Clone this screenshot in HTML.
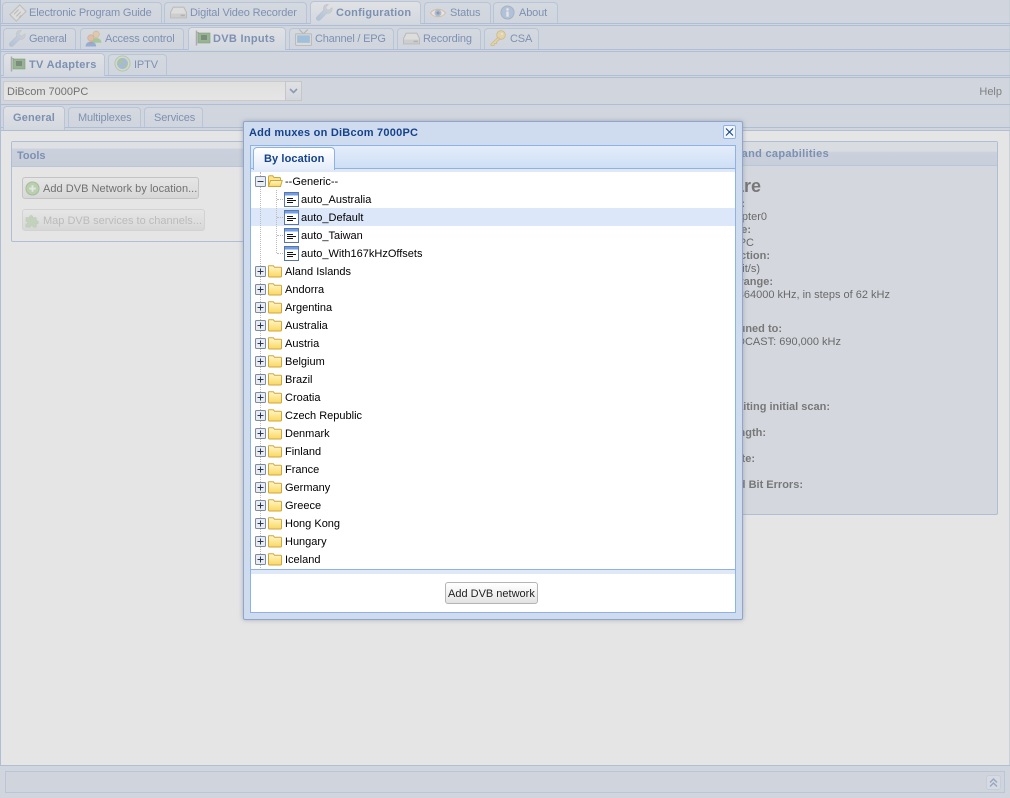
<!DOCTYPE html>
<html><head><meta charset="utf-8"><title>Add muxes</title>
<style>
html,body{margin:0;padding:0;width:1010px;height:798px;overflow:hidden;background:#fff;font:11px "Liberation Sans",Arial,sans-serif;color:#000}
.a{position:absolute}
#app{position:absolute;left:0;top:0;width:1010px;height:798px;overflow:hidden;background:#fff}
.bar{position:absolute;left:0;width:1010px;background:#d6e0f0}
.ln{position:absolute;left:0;width:1010px;height:1px;background:#92b0dc}
.t{position:absolute;box-sizing:border-box;border:1px solid #a4bee4;border-bottom:0;border-radius:4px 4px 0 0;background:linear-gradient(#dde5f3,#d5dff0);color:#2c5598;white-space:nowrap;line-height:19px;height:21px;letter-spacing:-.14px}
.t.on{background:linear-gradient(#f4f7fc,#dae5f5);font-weight:bold;height:22px;letter-spacing:.3px}
.t span{position:absolute;top:1px}
.t svg{position:absolute;top:1px;left:6px}
.r{position:absolute;white-space:nowrap;line-height:13px;color:#000}
.b{font-weight:bold;color:#222}
#mask{position:absolute;left:0;top:0;width:1010px;height:798px;background:#ccc;opacity:.5}
#dlg{position:absolute;left:243px;top:121px;width:500px;height:499px;box-sizing:border-box;border:1px solid #8fa6c8;border-radius:2px;background:#cfdcef;box-shadow:0 0 5px rgba(120,130,150,.55)}
.row{position:absolute;left:250px;width:485px;height:18px;line-height:18px;white-space:nowrap}
.row b{font-weight:normal;position:absolute;top:1px}
.row svg{position:absolute}
.btn{position:absolute;box-sizing:border-box;border:1px solid #bbb;border-radius:3px;background:linear-gradient(#fff,#f0f0f0 60%,#e2e2e2);white-space:nowrap;text-align:left}
</style></head><body>
<svg width="0" height="0" style="position:absolute">
<defs>
<linearGradient id="fo" x1="0" y1="0" x2="0" y2="1"><stop offset="0" stop-color="#fff8cc"/><stop offset="1" stop-color="#fbd760"/></linearGradient>
<linearGradient id="wr" x1="0" y1="1" x2="1" y2="0"><stop offset="0" stop-color="#8fb6ea"/><stop offset=".55" stop-color="#b6cdea"/><stop offset="1" stop-color="#d8d8d8"/></linearGradient>
<symbol id="folder" viewBox="0 0 16 14"><path d="M1.500 3.200V12a1 1 0 0 0 1 1h11a1 1 0 0 0 1-1V4.200a1 1 0 0 0-1-1H7.500L6.300 1.700H2.600a1 1 0 0 0-1.100 1.500z" fill="url(#fo)" stroke="#cfa63e"/></symbol>
<symbol id="ofolder" viewBox="0 0 16 14"><path d="M1.500 3V12.500H13.500V4.500a1 1 0 0 0-1-1H7L5.800 1.800H2.500a1 1 0 0 0-1 1.200z" fill="#fbe58c" stroke="#cfa63e"/><path d="M1.500 12.500L3.500 6.500H15.200L13.500 12.500z" fill="url(#fo)" stroke="#cfa63e"/></symbol>
<symbol id="leaf" viewBox="0 0 15 15"><rect x=".5" y=".5" width="14" height="14" fill="#fff" stroke="#5a76a8"/><rect x="1" y="1" width="13" height="2.500" fill="#6f9de6"/><path d="M3 6.500h6M3 8.500h9M3 10.500h6" stroke="#111" stroke-width="1"/></symbol>
<symbol id="plus" viewBox="0 0 11 11"><rect x=".5" y=".5" width="10" height="10" rx="1" fill="#e9ecf1" stroke="#7d8ba0"/><path d="M2.500 5.500h6M5.500 2.500v6" stroke="#2a3a55"/></symbol>
<symbol id="minus" viewBox="0 0 11 11"><rect x=".5" y=".5" width="10" height="10" rx="1" fill="#e9ecf1" stroke="#7d8ba0"/><path d="M2.500 5.500h6" stroke="#2a3a55"/></symbol>
<symbol id="wrench" viewBox="0 0 16 16"><path d="M15 3.500l-2.800 2.300-2.300-.6-.6-2.300L11.600 .4C9.400-.2 7 1.400 7 4c0 .7.100 1.200.3 1.700L.9 12a2.100 2.100 0 0 0 3 3l6.300-6.400c2.800 1 5.800-1.600 4.800-5.100z" fill="url(#wr)" stroke="#b4b4b4" stroke-width=".5"/></symbol>
<symbol id="hdd" viewBox="0 0 16 16"><path d="M3 3h10l2.500 5v5H.5V8z" fill="#eee" stroke="#aaa"/><path d="M1 9h14v3.500H1z" fill="#cfcfcf"/><rect x="10" y="10" width="4" height="1.500" fill="#999"/></symbol>
<symbol id="tag" viewBox="0 0 16 16"><path d="M.8 9.500L9.500 .8l5.700 5.700L6.500 15.200z" fill="#ececec" stroke="#b0b0b0"/><path d="M4.500 9l4-4M6.500 11l4-4M9 12l2-2" stroke="#aaa"/></symbol>
<symbol id="eye" viewBox="0 0 16 16"><path d="M.5 8C4 3 12 3 15.500 8 12 13 4 13 .5 8z" fill="#fff" stroke="#d8ae7c"/><circle cx="8" cy="8" r="3.500" fill="#8facd4"/><circle cx="8" cy="8" r="1.500" fill="#4a648f"/></symbol>
<symbol id="info" viewBox="0 0 16 16"><circle cx="8" cy="8" r="7" fill="#97b6e4" stroke="#7b98c2"/><rect x="6.700" y="7" width="2.600" height="5.500" fill="#fff"/><circle cx="8" cy="4.700" r="1.400" fill="#fff"/></symbol>
<symbol id="users" viewBox="0 0 16 16"><circle cx="10.500" cy="4" r="3" fill="#f2c48d" stroke="#c99a60" stroke-width=".5"/><path d="M6 12c0-3 2-4.500 4.500-4.500S15.500 9 15.500 12z" fill="#86c06a"/><circle cx="5.500" cy="7.500" r="3" fill="#f0b080" stroke="#c98a50" stroke-width=".5"/><path d="M.5 15.500c0-3 2-4.500 5-4.500s5 1.500 5 4.500z" fill="#5f8fd8"/><path d="M4 11l1.500 2L7 11z" fill="#d9534f"/></symbol>
<symbol id="card" viewBox="0 0 16 16"><rect x="3" y="3" width="12" height="10" fill="#5f9e5a" stroke="#3c6a3a" stroke-width=".6"/><rect x="6" y="5" width="6" height="5" fill="#2d4f2d"/><path d="M1.500 .5v15" stroke="#8a8a8a" stroke-width="1.500"/><path d="M1 2.500h3" stroke="#8a8a8a"/></symbol>
<symbol id="tv" viewBox="0 0 16 16"><path d="M4 .5L8 4.500 12 .5" fill="none" stroke="#999"/><rect x=".5" y="4.500" width="15" height="11" rx="1" fill="#e8e8e8" stroke="#aaa"/><rect x="2" y="6" width="12" height="7" fill="#74b2ea"/></symbol>
<symbol id="key" viewBox="0 0 16 16"><circle cx="11" cy="5" r="4.300" fill="#f6da88" stroke="#d0a63e" stroke-width=".8"/><path d="M8 7.500L1 14v1.500h3l.5-2h2l.5-2 3-2.500z" fill="#f6da88" stroke="#d0a63e" stroke-width=".8"/><circle cx="12" cy="4" r="1" fill="#fff"/></symbol>
<symbol id="globe" viewBox="0 0 18 18"><circle cx="9" cy="9" r="8" fill="#d6e9c2" stroke="#9cbd86"/><circle cx="9" cy="9" r="5.800" fill="#7ea9dc"/><path d="M6 5c2-1 4 0 4 1.500S7.500 8.500 7 10 5 10 4.500 8.500 5 6 6 5zM11 10c1.500-.500 3 0 2.500 1.500S11 13.500 10.500 12.500 10.500 10.500 11 10z" fill="#86bd74"/></symbol>
<symbol id="add" viewBox="0 0 16 16"><circle cx="8" cy="8" r="7" fill="#a5d58f" stroke="#7fa96f"/><path d="M4.500 8h7M8 4.500v7" stroke="#fff" stroke-width="2"/></symbol>
<symbol id="puzzle" viewBox="0 0 16 16"><path d="M1 5h4c-1-3 4-3 3 0h4v3.500c3-1 3 4 0 3V15H8.500c1-2.500-3.500-2.500-2.500 0H1v-3.500c2.500 1 2.500-3.500 0-2.500z" fill="#b8d8ae" stroke="#a9c89f" stroke-width=".6"/></symbol>
</defs></svg>

<div id="app">
<div class="bar" style="top:0;height:131px"></div>
<div class="a" style="left:0;top:0;width:1px;height:766px;background:#92b0dc"></div>
<div class="a" style="left:1009px;top:0;width:1px;height:766px;background:#c8d4e8"></div>
<div class="ln" style="top:23px"></div><div class="ln" style="top:25px"></div>
<div class="ln" style="top:49px"></div><div class="ln" style="top:51px"></div>
<div class="ln" style="top:75px"></div><div class="ln" style="top:77px"></div>
<div class="ln" style="top:104px"></div>
<div class="ln" style="top:127px"></div><div class="ln" style="top:130px"></div>

<!-- row 1 -->
<div class="t" style="left:2px;top:2px;width:160px"><svg width="18" height="18" style="left:6px"><use href="#tag"/></svg><span style="left:26px">Electronic Program Guide</span></div>
<div class="t" style="left:164px;top:2px;width:143px"><svg width="17" height="17" style="left:5px"><use href="#hdd"/></svg><span style="left:25px">Digital Video Recorder</span></div>
<div class="t on" style="left:310px;top:1px;width:111px;height:23px"><svg width="17" height="17" style="left:5px;top:2px"><use href="#wrench"/></svg><span style="left:25px;top:2px;letter-spacing:.25px">Configuration</span></div>
<div class="t" style="left:424px;top:2px;width:67px"><svg width="16" height="16" style="left:5px;top:2px"><use href="#eye"/></svg><span style="left:25px">Status</span></div>
<div class="t" style="left:493px;top:2px;width:65px"><svg width="15" height="15" style="top:2px"><use href="#info"/></svg><span style="left:25px">About</span></div>
<!-- row 2 -->
<div class="t" style="left:3px;top:28px;width:73px"><svg width="17" height="17" style="left:5px"><use href="#wrench"/></svg><span style="left:25px;letter-spacing:-.25px">General</span></div>
<div class="t" style="left:80px;top:28px;width:104px"><svg width="17" height="17" style="left:4px"><use href="#users"/></svg><span style="left:24px">Access control</span></div>
<div class="t on" style="left:188px;top:27px;width:98px;height:23px"><svg width="16" height="16" style="left:6px;top:2px"><use href="#card"/></svg><span style="left:24px;top:2px">DVB Inputs</span></div>
<div class="t" style="left:289px;top:28px;width:105px"><svg width="17" height="17" style="left:5px;top:0"><use href="#tv"/></svg><span style="left:25px;letter-spacing:-.2px">Channel / EPG</span></div>
<div class="t" style="left:397px;top:28px;width:84px"><svg width="17" height="17" style="left:5px"><use href="#hdd"/></svg><span style="left:25px">Recording</span></div>
<div class="t" style="left:484px;top:28px;width:55px"><svg width="16" height="16" style="left:5px"><use href="#key"/></svg><span style="left:25px">CSA</span></div>
<!-- row 3 -->
<div class="t on" style="left:3px;top:53px;width:102px;height:23px"><svg width="16" height="16" style="left:6px;top:2px"><use href="#card"/></svg><span style="left:25px;top:2px">TV Adapters</span></div>
<div class="t" style="left:108px;top:54px;width:59px"><svg width="17" height="17" style="left:5px;top:0"><use href="#globe"/></svg><span style="left:25px">IPTV</span></div>
<!-- toolbar -->
<div class="a" style="left:3px;top:81px;width:299px;height:20px;box-sizing:border-box;border:1px solid #c8c8c8;border-radius:2px;background:linear-gradient(#f4f4f4,#fff);line-height:20px;padding-left:3px;color:#111">DiBcom 7000PC</div>
<div class="a" style="left:285px;top:81px;width:17px;height:20px;box-sizing:border-box;border:1px solid #c0c0c0;background:linear-gradient(#f4f6fa,#dbe3f0)"><svg width="15" height="18" class="a" style="left:0;top:0"><path d="M4 7l3.500 3.500L11 7" fill="none" stroke="#4a6b9c" stroke-width="1.600"/></svg></div>
<div class="r" style="right:8px;top:86px;color:#333">Help</div>
<!-- row 4 -->
<div class="t on" style="left:3px;top:106px;width:62px;height:24px;letter-spacing:.15px"><span style="left:9px;top:2px">General</span></div>
<div class="t" style="left:68px;top:107px;width:73px;height:20px"><span style="left:9px">Multiplexes</span></div>
<div class="t" style="left:144px;top:107px;width:59px;height:20px"><span style="left:9px">Services</span></div>

<!-- tools panel -->
<div class="a" style="left:11px;top:141px;width:300px;height:101px;box-sizing:border-box;border:1px solid #92b0dc;border-radius:2px;background:#fff">
  <div class="a" style="left:0;top:0;right:0;height:24px;background:linear-gradient(#f0f4fa 25%,#c9d7ec 30%,#c4d2ea);border-bottom:1px solid #a9c0e2"></div>
  <div class="a" style="left:5px;top:8px;font-weight:bold;color:#2c5598;line-height:13px">Tools</div>
</div>
<div class="btn" style="left:22px;top:177px;width:177px;height:22px;line-height:23px;padding-left:20px;color:#111;letter-spacing:.03px"><svg class="a" width="15" height="15" style="left:2px;top:3px"><use href="#add"/></svg>Add DVB Network by location...</div>
<div class="btn" style="left:22px;top:209px;width:183px;height:22px;line-height:23px;padding-left:20px;color:#aaa;border-color:#d8d8d8"><svg class="a" width="15" height="15" style="left:2px;top:3px"><use href="#puzzle"/></svg>Map DVB services to channels...</div>

<!-- right panel -->
<div class="a" style="left:600px;top:141px;width:398px;height:374px;box-sizing:border-box;border:1px solid #92b0dc;border-radius:2px;background:#dce4f0">
  <div class="a" style="left:0;top:0;right:0;height:23px;background:linear-gradient(#e6ecf6 40%,#c9d7ec 45%,#c4d2ea);border-bottom:1px solid #a9c0e2"></div>
</div>
<div class="r" style="right:181px;top:148px;font-weight:bold;color:#2c5598;letter-spacing:.3px">Adapter hardware and capabilities</div>
<div class="r" style="right:249px;top:176px;font-weight:bold;font-size:18px;line-height:20px;color:#222">Hardware</div>
<div class="r b" style="right:265px;top:198px">Device path:</div>
<div class="r" style="right:243px;top:211px">/dev/dvb/adapter0</div>
<div class="r b" style="right:259px;top:224px">Device name:</div>
<div class="r" style="right:256px;top:237px">DiBcom 7000PC</div>
<div class="r b" style="right:240px;top:250px">Host connection:</div>
<div class="r" style="right:250px;top:263px">USB (480 Mbit/s)</div>
<div class="r b" style="right:237px;top:276px">Frequency range:</div>
<div class="r" style="right:120px;top:289px">174000 kHz - 864000 kHz, in steps of 62 kHz</div>
<div class="r b" style="right:228px;top:323px">Currently tuned to:</div>
<div class="r" style="right:169px;top:336px">BROADCAST: 690,000 kHz</div>
<div class="r b" style="right:180px;top:401px">Muxes awaiting initial scan:</div>
<div class="r b" style="right:244px;top:427px">Signal Strength:</div>
<div class="r b" style="right:255px;top:453px">Bit Error Rate:</div>
<div class="r b" style="right:207px;top:479px">Uncorrected Bit Errors:</div>

<!-- bottom -->
<div class="ln" style="top:765px"></div>
<div class="a" style="left:0;top:766px;width:1010px;height:32px;background:#d6e0f0"></div>
<div class="a" style="left:5px;top:771px;width:1000px;height:22px;box-sizing:border-box;border:1px solid #a8c0e4;background:#d2dcee"></div>
<div class="a" style="left:986px;top:775px;width:15px;height:15px;box-sizing:border-box;border:1px solid #c0cfe6;border-radius:3px;background:#e2eaf6"><svg class="a" width="13" height="13" style="left:0;top:0"><path d="M3 6.500l3.500-3.500L10 6.500M3 10.500l3.500-3.500L10 10.500" fill="none" stroke="#5f85bd" stroke-width="1.500"/></svg></div>
</div>

<div id="mask"></div>

<!-- dialog -->
<div id="dlg"></div>
<div class="a" style="left:249px;top:127px;font-weight:bold;color:#15428b;line-height:13px;white-space:nowrap;letter-spacing:.23px">Add muxes on DiBcom 7000PC</div>
<div class="a" style="left:723px;top:125px;width:13px;height:14px;box-sizing:border-box;border:1px solid #8fb0e0;border-radius:2px;background:#f3f7fd"><svg class="a" width="11" height="12" style="left:0;top:0"><path d="M2 2.500l7 7M9 2.500l-7 7" stroke="#15428b" stroke-width="1.100"/></svg></div>
<div class="a" style="left:250px;top:145px;width:486px;height:468px;box-sizing:border-box;border:1px solid #8db2e3;background:#fff"></div>
<div class="a" style="left:251px;top:146px;width:484px;height:22px;background:linear-gradient(#e4edfa,#cedff5)"></div>
<div class="a" style="left:251px;top:168px;width:484px;height:1px;background:#8db2e3"></div>
<div class="a" style="left:251px;top:169px;width:484px;height:3px;background:#dfe8f6"></div>
<div class="t on" style="left:253px;top:147px;width:82px;height:23px;border-color:#8db2e3;background:linear-gradient(#fff,#e3ecfa);color:#15428b;letter-spacing:.1px"><span style="left:10px;top:2px">By location</span></div>

<!-- tree -->
<div class="a" style="left:251px;top:172px;width:484px;height:397px;overflow:hidden;background:#fff"></div>
<div class="a" style="left:251px;top:208px;width:484px;height:18px;background:#dce8fa"></div>
<div class="a" style="left:260px;top:172px;height:396px;border-left:1px dotted #bbb"></div>
<div class="a" style="left:276px;top:190px;height:63px;border-left:1px dotted #bbb"></div>
<div class="a" style="left:277px;top:199px;width:6px;border-top:1px dotted #bbb"></div>
<div class="a" style="left:277px;top:217px;width:6px;border-top:1px dotted #bbb"></div>
<div class="a" style="left:277px;top:235px;width:6px;border-top:1px dotted #bbb"></div>
<div class="a" style="left:277px;top:253px;width:6px;border-top:1px dotted #bbb"></div>

<div class="row" style="top:172px"><svg width="11" height="11" style="left:5px;top:4px"><use href="#minus"/></svg><svg width="16" height="14" style="left:17px;top:2px"><use href="#ofolder"/></svg><b style="left:35px">--Generic--</b></div>
<div class="row" style="top:190px"><svg width="15" height="15" style="left:34px;top:2px"><use href="#leaf"/></svg><b style="left:51px">auto_Australia</b></div>
<div class="row" style="top:208px"><svg width="15" height="15" style="left:34px;top:2px"><use href="#leaf"/></svg><b style="left:51px">auto_Default</b></div>
<div class="row" style="top:226px"><svg width="15" height="15" style="left:34px;top:2px"><use href="#leaf"/></svg><b style="left:51px">auto_Taiwan</b></div>
<div class="row" style="top:244px"><svg width="15" height="15" style="left:34px;top:2px"><use href="#leaf"/></svg><b style="left:51px">auto_With167kHzOffsets</b></div>
<div class="row" style="top:262px"><svg width="11" height="11" style="left:5px;top:4px"><use href="#plus"/></svg><svg width="16" height="14" style="left:17px;top:2px"><use href="#folder"/></svg><b style="left:35px">Aland Islands</b></div>
<div class="row" style="top:280px"><svg width="11" height="11" style="left:5px;top:4px"><use href="#plus"/></svg><svg width="16" height="14" style="left:17px;top:2px"><use href="#folder"/></svg><b style="left:35px">Andorra</b></div>
<div class="row" style="top:298px"><svg width="11" height="11" style="left:5px;top:4px"><use href="#plus"/></svg><svg width="16" height="14" style="left:17px;top:2px"><use href="#folder"/></svg><b style="left:35px">Argentina</b></div>
<div class="row" style="top:316px"><svg width="11" height="11" style="left:5px;top:4px"><use href="#plus"/></svg><svg width="16" height="14" style="left:17px;top:2px"><use href="#folder"/></svg><b style="left:35px">Australia</b></div>
<div class="row" style="top:334px"><svg width="11" height="11" style="left:5px;top:4px"><use href="#plus"/></svg><svg width="16" height="14" style="left:17px;top:2px"><use href="#folder"/></svg><b style="left:35px">Austria</b></div>
<div class="row" style="top:352px"><svg width="11" height="11" style="left:5px;top:4px"><use href="#plus"/></svg><svg width="16" height="14" style="left:17px;top:2px"><use href="#folder"/></svg><b style="left:35px">Belgium</b></div>
<div class="row" style="top:370px"><svg width="11" height="11" style="left:5px;top:4px"><use href="#plus"/></svg><svg width="16" height="14" style="left:17px;top:2px"><use href="#folder"/></svg><b style="left:35px">Brazil</b></div>
<div class="row" style="top:388px"><svg width="11" height="11" style="left:5px;top:4px"><use href="#plus"/></svg><svg width="16" height="14" style="left:17px;top:2px"><use href="#folder"/></svg><b style="left:35px">Croatia</b></div>
<div class="row" style="top:406px"><svg width="11" height="11" style="left:5px;top:4px"><use href="#plus"/></svg><svg width="16" height="14" style="left:17px;top:2px"><use href="#folder"/></svg><b style="left:35px">Czech Republic</b></div>
<div class="row" style="top:424px"><svg width="11" height="11" style="left:5px;top:4px"><use href="#plus"/></svg><svg width="16" height="14" style="left:17px;top:2px"><use href="#folder"/></svg><b style="left:35px">Denmark</b></div>
<div class="row" style="top:442px"><svg width="11" height="11" style="left:5px;top:4px"><use href="#plus"/></svg><svg width="16" height="14" style="left:17px;top:2px"><use href="#folder"/></svg><b style="left:35px">Finland</b></div>
<div class="row" style="top:460px"><svg width="11" height="11" style="left:5px;top:4px"><use href="#plus"/></svg><svg width="16" height="14" style="left:17px;top:2px"><use href="#folder"/></svg><b style="left:35px">France</b></div>
<div class="row" style="top:478px"><svg width="11" height="11" style="left:5px;top:4px"><use href="#plus"/></svg><svg width="16" height="14" style="left:17px;top:2px"><use href="#folder"/></svg><b style="left:35px">Germany</b></div>
<div class="row" style="top:496px"><svg width="11" height="11" style="left:5px;top:4px"><use href="#plus"/></svg><svg width="16" height="14" style="left:17px;top:2px"><use href="#folder"/></svg><b style="left:35px">Greece</b></div>
<div class="row" style="top:514px"><svg width="11" height="11" style="left:5px;top:4px"><use href="#plus"/></svg><svg width="16" height="14" style="left:17px;top:2px"><use href="#folder"/></svg><b style="left:35px">Hong Kong</b></div>
<div class="row" style="top:532px"><svg width="11" height="11" style="left:5px;top:4px"><use href="#plus"/></svg><svg width="16" height="14" style="left:17px;top:2px"><use href="#folder"/></svg><b style="left:35px">Hungary</b></div>
<div class="row" style="top:550px"><svg width="11" height="11" style="left:5px;top:4px"><use href="#plus"/></svg><svg width="16" height="14" style="left:17px;top:2px"><use href="#folder"/></svg><b style="left:35px">Iceland</b></div>

<div class="a" style="left:251px;top:569px;width:484px;height:1px;background:#8db2e3"></div>
<div class="a" style="left:251px;top:570px;width:484px;height:4px;background:#dfe8f6"></div>
<div class="btn" style="left:445px;top:582px;width:93px;height:22px;line-height:23px;padding-left:2px;color:#222;border-color:#b4b4b4">Add DVB network</div>
</body></html>
